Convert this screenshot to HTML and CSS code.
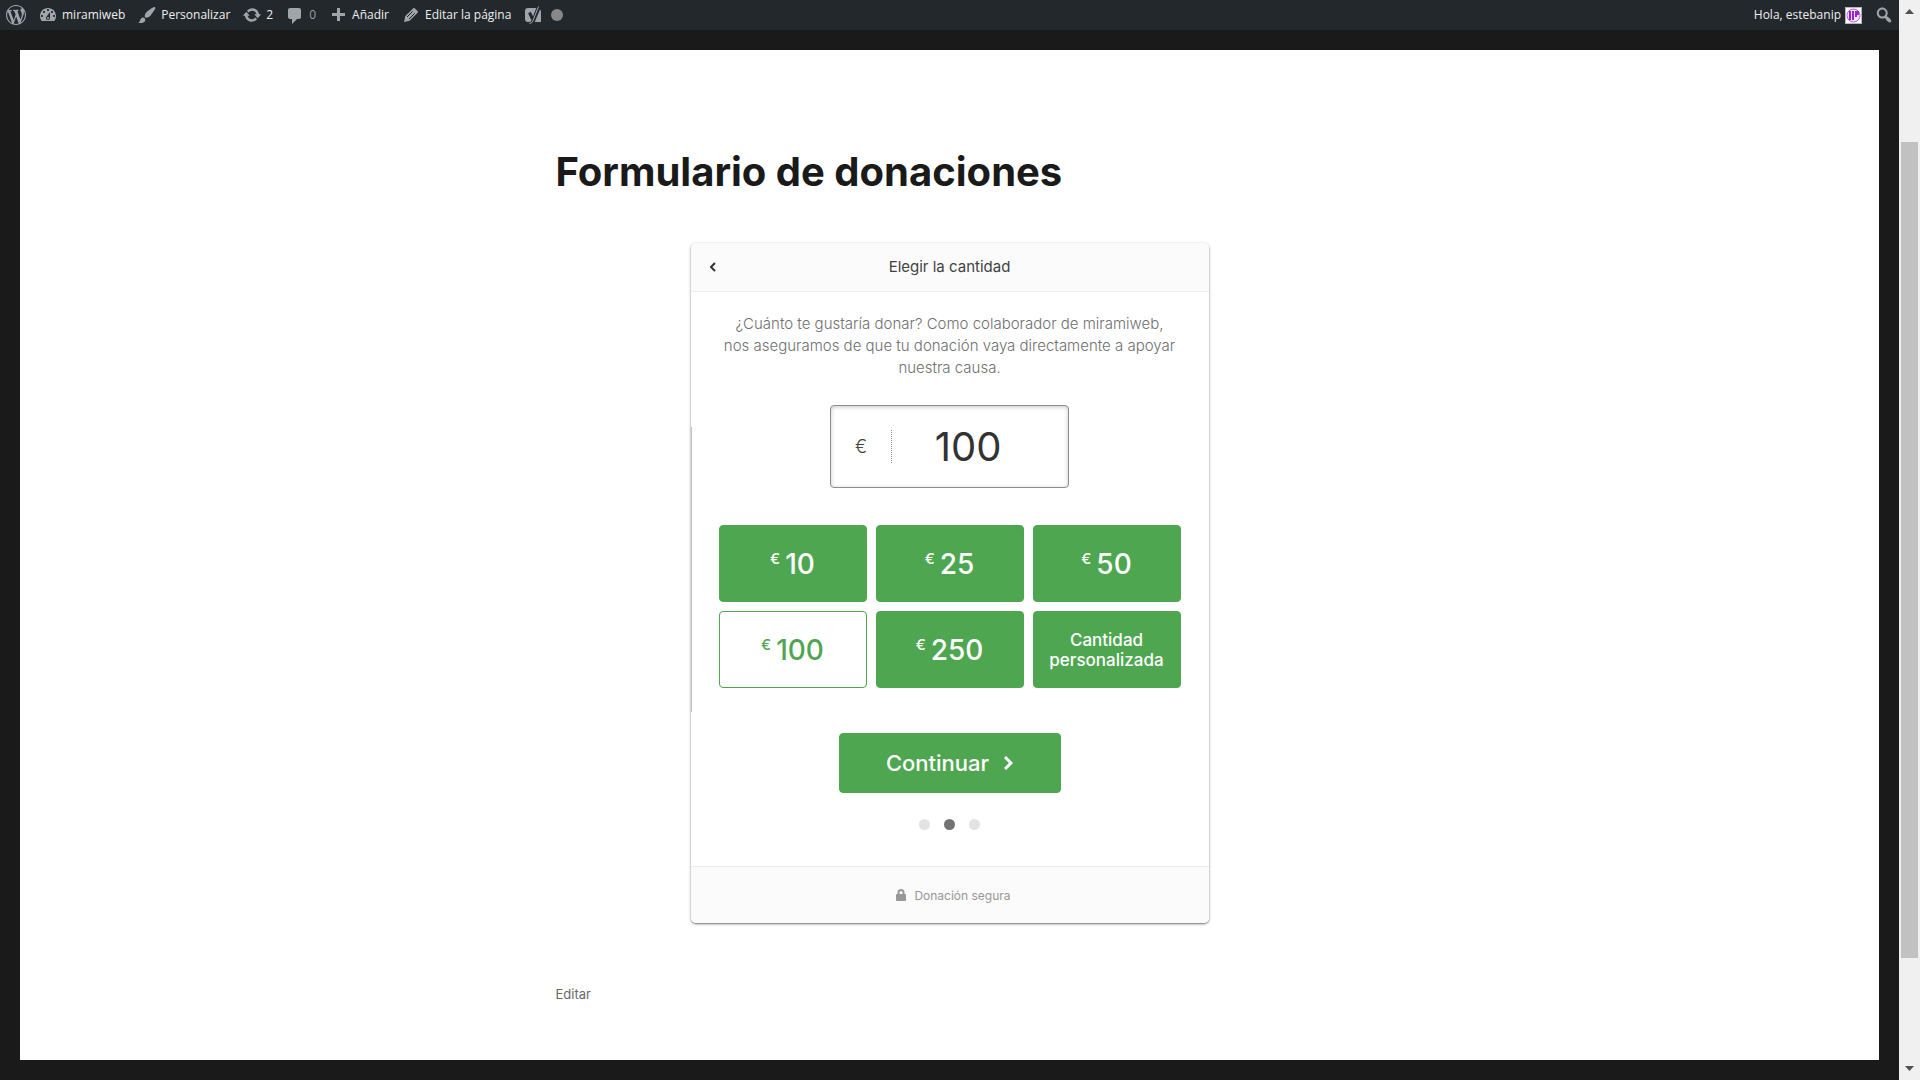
FILE: index.html
```html
<!DOCTYPE html>
<html lang="es">
<head>
<meta charset="utf-8">
<meta name="viewport" content="width=device-width, initial-scale=1">
<title>Formulario de donaciones</title>
<link rel="stylesheet" href="styles.css">
</head>
<body>
<div class="viewport">
  <header class="adminbar">
    <nav class="adminbar-group" aria-label="Barra de herramientas">
      <a class="bar-item" href="#" aria-label="WordPress"><svg class="bar-icon" viewBox="0 0 20 20"><path d="M20 10c0-5.51-4.49-10-10-10C4.48 0 0 4.49 0 10c0 5.52 4.48 10 10 10 5.51 0 10-4.48 10-10zM7.78 15.37L4.37 6.22c.55-.02 1.17-.08 1.17-.08.5-.06.44-1.13-.06-1.11 0 0-1.45.11-2.37.11-.18 0-.37 0-.58-.01C4.12 2.69 6.87 1.11 10 1.11c2.33 0 4.45.87 6.05 2.34-.68-.11-1.65.39-1.65 1.58 0 .74.45 1.36.9 2.1.35.61.55 1.36.55 2.46 0 1.49-1.4 5-1.4 5l-3.03-8.37c.54-.02.82-.17.82-.17.5-.05.44-1.25-.06-1.22 0 0-1.44.12-2.38.12-.87 0-2.33-.12-2.33-.12-.5-.03-.56 1.2-.06 1.22l.92.08 1.26 3.41zM17.41 10c.24-.64.74-1.87.43-4.25.7 1.29 1.05 2.71 1.05 4.25 0 3.29-1.73 6.24-4.4 7.78.97-2.59 1.94-5.2 2.92-7.78zM6.1 18.09C3.12 16.65 1.11 13.53 1.11 10c0-1.3.23-2.48.72-3.59C3.25 10.3 4.67 14.2 6.1 18.09zm4.03-6.63l2.58 6.98c-.86.29-1.76.45-2.71.45-.79 0-1.57-.11-2.29-.33.81-2.38 1.62-4.74 2.42-7.1z"/></svg></a>
      <a class="bar-item" href="#"><svg class="bar-icon" viewBox="0 0 20 20"><path d="M3.76 16h12.48c1.1-1.37 1.76-3.11 1.76-5 0-4.42-3.58-8-8-8s-8 3.58-8 8c0 1.89.66 3.63 1.76 5zM10 4c.55 0 1 .45 1 1s-.45 1-1 1-1-.45-1-1 .45-1 1-1zM6 6c.55 0 1 .45 1 1s-.45 1-1 1-1-.45-1-1 .45-1 1-1zm8 0c.55 0 1 .45 1 1s-.45 1-1 1-1-.45-1-1 .45-1 1-1zm-5.37 5.55L12 7v6c0 1.1-.9 2-2 2s-2-.9-2-2c0-.57.24-1.08.63-1.45zM4 10c.55 0 1 .45 1 1s-.45 1-1 1-1-.45-1-1 .45-1 1-1zm12 0c.55 0 1 .45 1 1s-.45 1-1 1-1-.45-1-1 .45-1 1-1zm-5 3c0-.55-.45-1-1-1s-1 .45-1 1 .45 1 1 1 1-.45 1-1z"/></svg>miramiweb</a>
      <a class="bar-item" href="#"><svg class="bar-icon" viewBox="0 0 20 20"><path d="M18.33 3.57s.27-.8-.31-1.36c-.53-.52-1.22-.24-1.22-.24-.61.3-5.76 3.47-7.67 5.57-.86.96-2.06 3.79-1.09 4.82.92.98 3.96-.17 4.79-1 2.06-2.06 5.21-7.17 5.5-7.79zM1.4 17.65c2.37-1.56 1.46-3.41 3.23-4.64.93-.65 2.22-.62 3.08.29.63.67.8 2.57-.16 3.46-1.57 1.45-4 1.55-6.15.89z"/></svg>Personalizar</a>
      <a class="bar-item" href="#"><svg class="bar-icon" viewBox="0 0 20 20"><path d="M10.2 3.28c3.53 0 6.43 2.61 6.92 6h2.08l-3.5 4-3.5-4h2.32c-.45-1.97-2.21-3.45-4.32-3.45-1.45 0-2.73.71-3.54 1.78L4.95 5.66C6.23 4.2 8.11 3.28 10.2 3.28zm-.4 13.44c-3.52 0-6.43-2.61-6.92-6H.8l3.5-4c1.17 1.33 2.33 2.67 3.5 4H5.48c.45 1.97 2.21 3.45 4.32 3.45 1.45 0 2.73-.71 3.54-1.78l1.71 1.95c-1.28 1.46-3.15 2.38-5.25 2.38z"/></svg>2</a>
      <a class="bar-item bar-item-muted" href="#"><svg class="bar-icon" viewBox="0 0 20 20"><path d="M5 3h9c1.1 0 2 .9 2 2v7c0 1.1-.9 2-2 2h-2l-5 5v-5H5c-1.1 0-2-.9-2-2V5c0-1.1.9-2 2-2z"/></svg>0</a>
      <a class="bar-item" href="#"><svg class="bar-icon" viewBox="0 0 20 20"><path d="M17 8v3h-5v5H9v-5H4V8h5V3h3v5h5z"/></svg>Añadir</a>
      <a class="bar-item" href="#"><svg class="bar-icon" viewBox="0 0 20 20"><path d="M13.89 3.39l2.71 2.72c.46.46.42 1.24.03 1.64l-8.01 8.02-5.56 1.16 1.16-5.58s7.6-7.63 7.99-8.03c.39-.39 1.22-.39 1.68.07z"/><path class="pencil-stripe" d="M6 12l5.600-5.600M8 14l5.600-5.600"/></svg>Editar la página</a>
      <a class="bar-item bar-item-seo" href="#" aria-label="SEO"><svg class="bar-icon" viewBox="0 0 20 20"><path d="M5 3h11L10.500 17H5a3 3 0 0 1-3-3V6a3 3 0 0 1 3-3z"/><path d="M17 4.500a3 3 0 0 1 1 2.300V17h-6.300z"/><path class="seo-outline" d="M6.500 7.500l3 6.500M15.500 1.500L10 15.500Q9 18.500 6.500 18.500"/><path class="seo-stroke" d="M15.500 1.500L10 15.500Q9 18.500 6.500 18.500"/></svg><span class="seo-dot"></span></a>
    </nav>
    <div class="adminbar-group">
      <a class="bar-item" href="#">Hola, estebanip<svg class="avatar" viewBox="0 0 17 17"><rect width="17" height="17" fill="#b9b3bd"/><rect x="1" y="1" width="15" height="15" fill="#fff"/><circle cx="8.500" cy="8.500" r="6.500" fill="#f5e6fb" stroke="#b45cda"/><path d="M5 4v9M8 4v9M11 4v6M13 4v4" stroke="#a020d8" stroke-width="2"/></svg></a>
      <a class="bar-item" href="#" aria-label="Buscar"><svg class="bar-icon" viewBox="0 0 20 20"><path d="M12.140 4.180c1.870 1.870 2.110 4.750.72 6.890.12.1.22.21.36.31.2.16.47.36.81.59.34.24.56.39.66.47.42.31.73.57.94.78.32.32.6.65.84 1 .25.35.44.69.59 1.040.14.35.21.68.18 1-.02.32-.14.59-.36.81s-.49.34-.81.36c-.31.02-.65-.04-.99-.19-.35-.14-.7-.34-1.040-.59-.35-.24-.68-.52-1-.84-.21-.21-.47-.52-.77-.93-.1-.13-.25-.35-.47-.66-.22-.32-.4-.57-.56-.78-.16-.2-.29-.35-.44-.5-2.070 1.090-4.690.76-6.440-.98-2.140-2.150-2.140-5.640 0-7.780 2.150-2.150 5.630-2.150 7.780 0zm-1.410 6.360c1.360-1.370 1.360-3.580 0-4.950-1.370-1.370-3.590-1.370-4.950 0-1.370 1.370-1.370 3.580 0 4.950 1.360 1.370 3.580 1.370 4.950 0z"/></svg></a>
    </div>
  </header>
  <main class="page">
    <article class="entry">
      <h1 class="entry-title">Formulario de donaciones</h1>
      <form class="donation">
        <div class="donation-header">
          <button class="back" type="button" aria-label="Volver"><svg viewBox="0 0 6 10" width="6" height="10"><path d="M5 1L1 5l4 4" fill="none" stroke="currentColor" stroke-width="2"/></svg></button>
          <h2 class="donation-title">Elegir la cantidad</h2>
        </div>
        <div class="donation-body">
          <p class="intro">¿Cuánto te gustaría donar? Como colaborador de miramiweb,<br>nos aseguramos de que tu donación vaya directamente a apoyar<br>nuestra causa.</p>
          <div class="amount">
            <label class="amount-currency" for="amount">€</label>
            <input class="amount-input" id="amount" type="text" value="100">
          </div>
          <div class="levels">
            <button class="level" type="button"><span class="level-currency">€</span>10</button>
            <button class="level" type="button"><span class="level-currency">€</span>25</button>
            <button class="level" type="button"><span class="level-currency">€</span>50</button>
            <button class="level level-selected" type="button"><span class="level-currency">€</span>100</button>
            <button class="level" type="button"><span class="level-currency">€</span>250</button>
            <button class="level level-custom" type="button">Cantidad personalizada</button>
          </div>
          <button class="continue" type="button">Continuar<svg viewBox="0 0 9 14" width="9" height="14"><path d="M1 1l6 6-6 6" fill="none" stroke="currentColor" stroke-width="3"/></svg></button>
          <div class="steps">
            <span class="step"></span><span class="step step-current"></span><span class="step"></span>
          </div>
        </div>
        <div class="donation-footer">
          <svg viewBox="0 0 10 12" width="10" height="12"><path d="M2.500 5V3.500a2.500 2.500 0 0 1 5 0V5" fill="none" stroke="currentColor" stroke-width="2"/><rect y="5" width="10" height="7" rx="1" fill="currentColor"/></svg>
          Donación segura
        </div>
      </form>
      <a class="edit-link" href="#">Editar</a>
    </article>
  </main>
</div>
<div class="scrollbar" aria-hidden="true">
  <svg class="scroll-arrow" viewBox="0 0 9 5"><path d="M0 5l4.500-5L9 5z"/></svg>
  <div class="scroll-track"><div class="scroll-thumb"></div></div>
  <svg class="scroll-arrow" viewBox="0 0 9 5"><path d="M0 0l4.500 5L9 0z"/></svg>
</div>
</body>
</html>
```
FILE: styles.css
```css
* {
  box-sizing: border-box;
}

body {
  display: flex;
  min-height: 100vh;
  margin: 0;
  background: #1a1a1a;
  color: #1a1a1a;
  font-family: Inter, "Open Sans", sans-serif;
}

button,
input {
  font: inherit;
}

a {
  color: inherit;
  text-decoration: none;
}

.viewport {
  display: flex;
  flex: 1;
  flex-direction: column;
  min-width: 0;
}

/* Admin bar */
.adminbar {
  display: flex;
  justify-content: space-between;
  height: 30px;
  padding: 0 5px 0 6px;
  background: #23282d;
  color: #eee;
  font-family: "Open Sans", "Noto Sans", sans-serif;
  font-size: 12px;
  line-height: 30px;
}

.adminbar-group {
  display: flex;
  gap: 12px;
}

.bar-item {
  display: flex;
  align-items: center;
  gap: 4px;
  white-space: nowrap;
}

.bar-item-muted {
  color: #9b9fa3;
}

.bar-item-seo {
  gap: 8px;
}

.bar-icon {
  width: 20px;
  height: 20px;
  fill: #a0a5aa;
}

.pencil-stripe {
  stroke: #23282d;
  stroke-width: 1;
}

.seo-outline {
  fill: none;
  stroke: #23282d;
  stroke-width: 3;
}

.seo-stroke {
  fill: none;
  stroke: #a0a5aa;
  stroke-width: 1;
}

.seo-dot {
  width: 12px;
  height: 12px;
  border-radius: 50%;
  background: #888;
}

.avatar {
  width: 17px;
  height: 17px;
}

/* Page */
.page {
  flex: 1;
  margin: 20px;
  padding: 96px 20px 56px;
  background: #fff;
}

.entry {
  max-width: 788px;
  margin: 0 auto;
}

.entry-title {
  margin: 0 0 45px;
  font-size: 40px;
  font-weight: 700;
  line-height: 52px;
}

.edit-link {
  color: #686868;
  font-size: 13px;
  line-height: 20px;
}

/* Donation form */
.donation {
  position: relative;
  max-width: 518px;
  margin: 0 auto 60px;
  border-radius: 5px;
  background: #fff;
  box-shadow: 0 1px 2px rgba(0, 0, 0, 0.5), 0 1px 4px rgba(0, 0, 0, 0.1);
  overflow: hidden;
}

.donation::before {
  content: "";
  position: absolute;
  top: 27%;
  left: 0;
  width: 1px;
  height: 42%;
  background: #c4c4c8;
}

.donation-header {
  display: grid;
  grid-template-columns: 44px 1fr 44px;
  align-items: center;
  height: 49px;
  border-bottom: 1px solid #ececec;
  background: #fbfbfb;
}

.back {
  display: grid;
  place-items: center;
  height: 48px;
  padding: 0;
  border: 0;
  background: none;
  color: #333;
}

.donation-title {
  margin: 0;
  color: #424242;
  font-size: 15px;
  font-weight: 400;
  line-height: 20px;
  text-align: center;
}

.donation-body {
  display: flex;
  flex-direction: column;
  align-items: center;
  padding: 21px 28px 36px;
}

.intro {
  margin: 0;
  color: #707070;
  font-size: 15px;
  font-weight: 300;
  line-height: 22px;
  text-align: center;
}

.amount {
  display: flex;
  align-items: center;
  width: 239px;
  height: 83px;
  margin: 26px 0 37px;
  border: 1px solid #8c8c8c;
  border-radius: 4px;
  box-shadow: inset 0 1px 4px rgba(0, 0, 0, 0.22);
}

.amount-currency {
  width: 61px;
  border-right: 1px dotted #8c8c8c;
  color: #444;
  font-size: 18px;
  font-weight: 300;
  line-height: 33px;
  text-align: center;
}

.amount-input {
  flex: 1;
  min-width: 0;
  height: 60px;
  padding: 0 24px 0 0;
  border: 0;
  background: none;
  color: #333;
  font-size: 40px;
  text-align: center;
}

.levels {
  display: grid;
  grid-template-columns: repeat(3, 1fr);
  gap: 9px;
  width: 100%;
}

.level,
.continue {
  display: flex;
  align-items: center;
  justify-content: center;
  border: 1px solid #4fa651;
  border-radius: 4px;
  background: #4fa651;
  color: #fff;
  font-weight: 500;
}

.level {
  gap: 5px;
  height: 77px;
  padding: 0;
  font-size: 28px;
}

.level-currency {
  padding-bottom: 10px;
  font-size: 15px;
}

.level-selected {
  background: #fff;
  color: #4fa651;
}

.level-custom {
  padding: 0 12px;
  font-size: 17px;
  line-height: 20px;
}

.continue {
  gap: 15px;
  width: 222px;
  height: 60px;
  margin-top: 45px;
  font-size: 22px;
}

.steps {
  display: flex;
  gap: 14px;
  margin-top: 26px;
}

.step {
  width: 11px;
  height: 11px;
  border-radius: 50%;
  background: #e3e3e3;
}

.step-current {
  background: #737373;
}

.donation-footer {
  display: flex;
  align-items: center;
  justify-content: center;
  gap: 8px;
  height: 57px;
  padding-left: 8px;
  border-top: 1px solid #ececec;
  background: #fbfbfb;
  color: #989898;
  font-size: 12px;
}

/* Window scrollbar */
.scrollbar {
  display: flex;
  flex-direction: column;
  align-items: center;
  width: 21px;
  padding: 9px 2px;
  background: #f0f0f0;
}

.scroll-arrow {
  width: 9px;
  height: 5px;
  fill: #505050;
}

.scroll-track {
  display: flex;
  flex: 1;
  width: 17px;
  padding: 128px 0 108px;
}

.scroll-thumb {
  flex: 1;
  background: #c1c1c1;
}
```
